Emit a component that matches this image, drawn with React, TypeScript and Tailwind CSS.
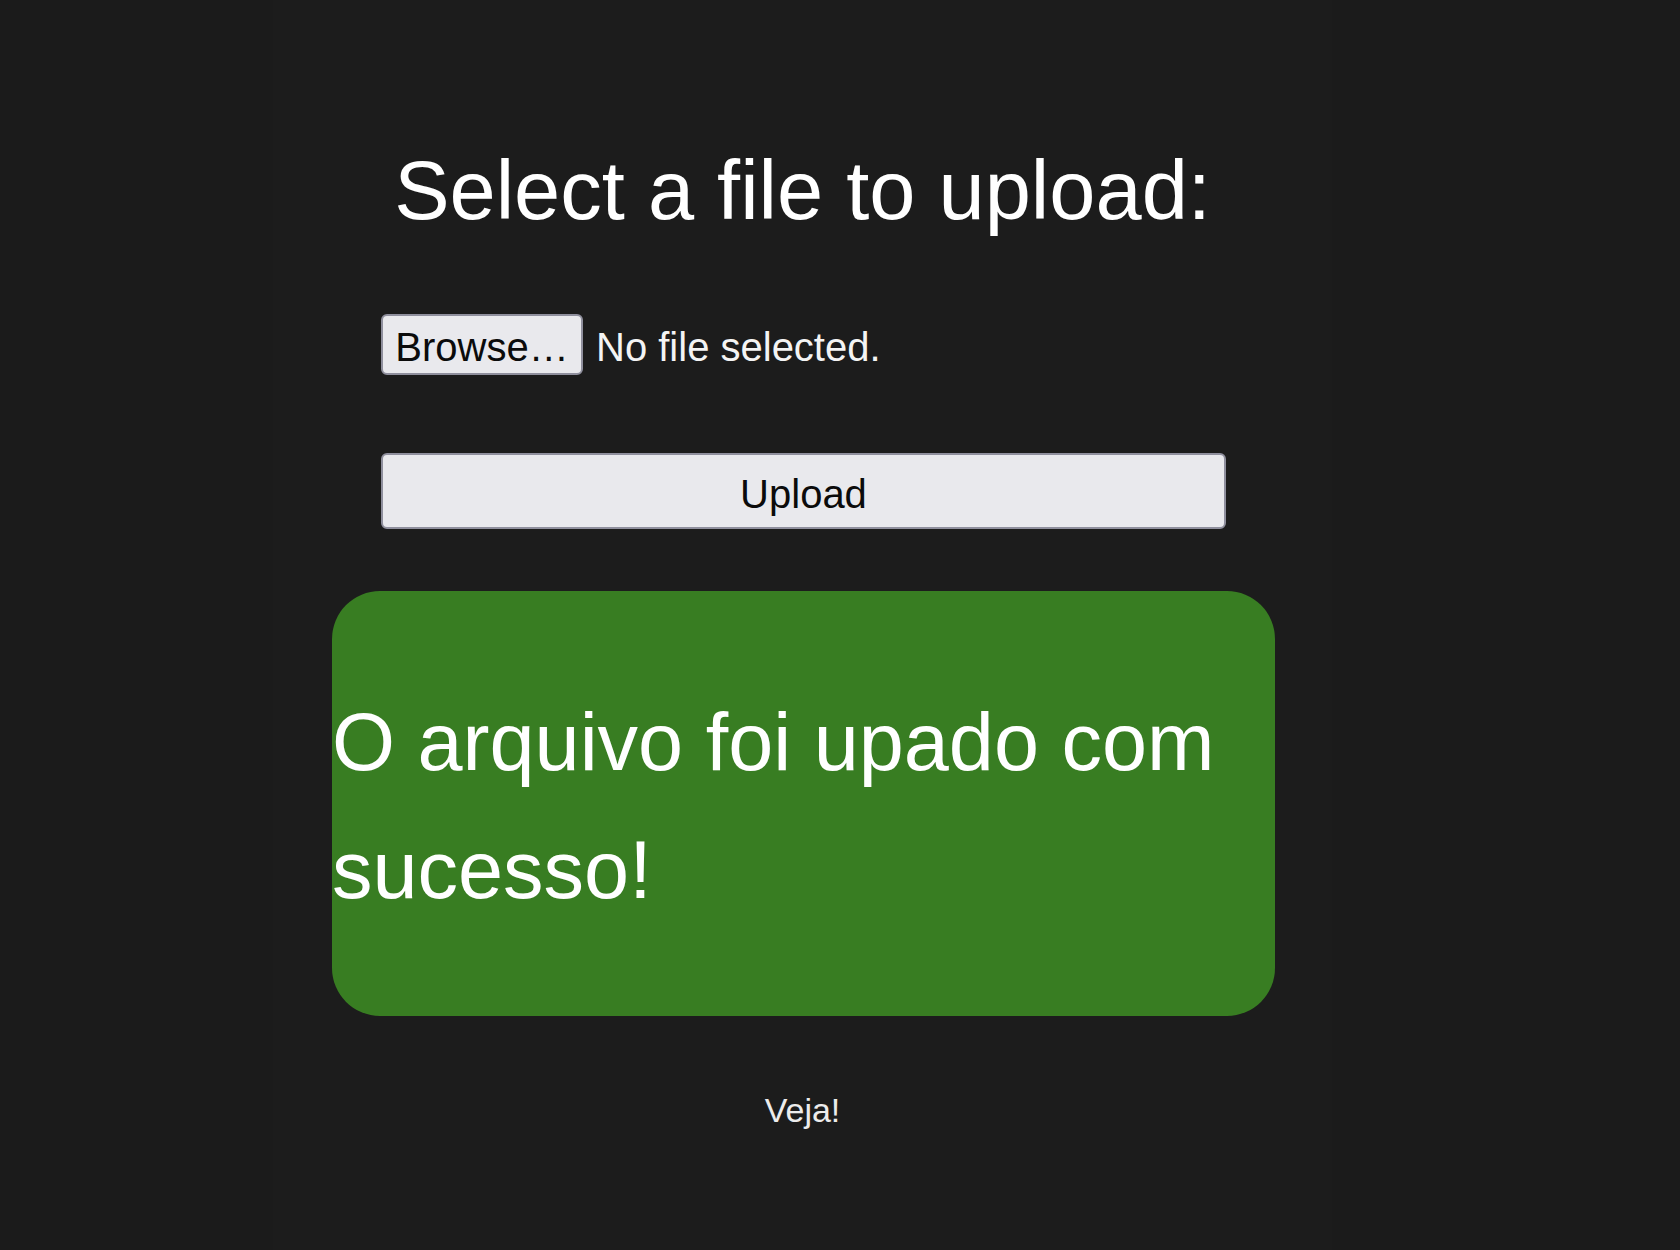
export default function App() {
  return (
    <div className="min-h-screen bg-[#1b1b1b] pl-[273px] font-['Liberation_Sans',Arial,sans-serif] text-white">
      <div className="flex min-h-[1250px] w-[1059px] flex-col bg-[#1c1c1c] pt-[149px]">
        <h1 className="text-center text-[83px] leading-none font-normal">
          Select a file to upload:
        </h1>

        <form
          className="mt-[82px] flex flex-col px-[108px]"
          onSubmit={(e) => e.preventDefault()}
        >
          {/* fake file picker, styled like the Firefox one */}
          <label className="flex items-center gap-[13px] text-[40px] leading-none">
            <span className="flex h-[61px] w-[202px] items-center justify-center rounded-[6px] border-2 border-[#8f8f9d] bg-[#e9e9ed] pt-[4px] text-[#0b0b0b]">
              Browse…
            </span>
            <span className="pt-[4px] text-[#f4f4f4]">No file selected.</span>
          </label>

          <button
            type="submit"
            className="mt-[78px] flex h-[76px] w-[845px] items-center justify-center rounded-[6px] border-2 border-[#8f8f9d] bg-[#e9e9ed] pt-[5px] text-[40px] leading-none text-[#0b0b0b]"
          >
            Upload
          </button>
        </form>

        <div className="mx-[59px] mt-[62px] h-[425px] w-[943px] rounded-[48px] bg-[#387d22] pt-[87px]">
          <p className="text-[81px] leading-[128px]">
            O arquivo foi upado com sucesso!
          </p>
        </div>

        <p className="mt-[77px] text-center text-[34px] leading-none text-[#ececec]">
          Veja!
        </p>
      </div>
    </div>
  );
}
